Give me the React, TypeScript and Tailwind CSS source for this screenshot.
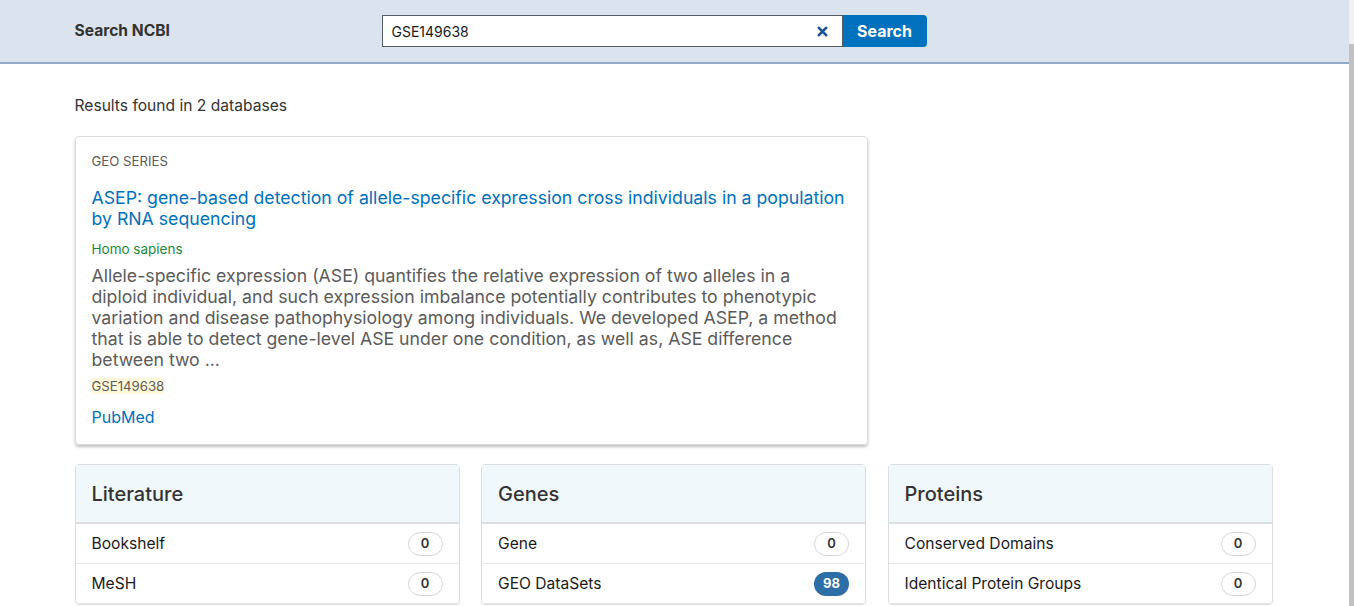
import { X } from "lucide-react";

type Db = { name: string; count: number };

const groups: { title: string; items: Db[] }[] = [
  {
    title: "Literature",
    items: [
      { name: "Bookshelf", count: 0 },
      { name: "MeSH", count: 0 },
    ],
  },
  {
    title: "Genes",
    items: [
      { name: "Gene", count: 0 },
      { name: "GEO DataSets", count: 98 },
    ],
  },
  {
    title: "Proteins",
    items: [
      { name: "Conserved Domains", count: 0 },
      { name: "Identical Protein Groups", count: 0 },
    ],
  },
];

function Badge({ count }: { count: number }) {
  if (count > 0) {
    return (
      <span className="flex h-6 min-w-[35px] items-center justify-center rounded-full bg-[#2e6ea6] px-2 text-[13px] font-bold text-white">
        {count}
      </span>
    );
  }
  return (
    <span className="flex h-6 min-w-[35px] items-center justify-center rounded-full border border-[#d6d7d9] bg-white px-2 text-[13px] font-semibold text-[#333]">
      {count}
    </span>
  );
}

export default function App() {
  return (
    <div className="flex h-[606px] overflow-hidden bg-white font-['Inter',sans-serif] text-[#333]">
      <div className="flex min-w-0 flex-1 flex-col">
        {/* top search bar */}
        <header className="h-[64px] shrink-0 border-b-2 border-[#8fa9c6] bg-[#dbe4ee]">
          <div className="mx-auto flex h-full w-full max-w-[1200px] items-center">
            <span className="w-[307px] text-[15.6px] font-bold text-[#333]">Search NCBI</span>
            <div className="flex h-8 items-stretch">
              <div className="flex w-[461px] items-center border border-[#565c65] bg-white pl-[9px] pr-3">
                <span className="flex-1 text-[14px] text-[#1b1b1b]">GSE149638</span>
                <X className="h-[15px] w-[15px] text-[#205493]" strokeWidth={4} />
              </div>
              <button className="w-[84px] rounded-r-[4px] bg-[#0071bc] text-base font-bold text-white">
                Search
              </button>
            </div>
          </div>
        </header>

        <main className="mx-auto w-full max-w-[1200px]">
          <p className="mt-[31px] text-[15.6px] leading-[22px] text-[#333]">Results found in 2 databases</p>

          <article className="mt-[19px] w-[793px] rounded-[4px] border border-[#dcdcdc] px-4 pt-[15px] pb-[15px] shadow-[0_2px_3px_rgba(0,0,0,0.25)]">
            <div className="text-[13.2px] uppercase text-[#5c5c5c]">GEO Series</div>
            <a className="mt-[15px] block text-[17.7px] leading-[21px] text-[#0071bc]">
              ASEP: gene-based detection of allele-specific expression cross individuals in a population by RNA sequencing
            </a>
            <div className="mt-[10px] text-[13.5px] text-[#178a3d]">Homo sapiens</div>
            <p className="mt-[6px] text-[17.7px] leading-[21px] text-[#5b5b5b]">
              Allele-specific expression (ASE) quantifies the relative expression of two alleles in a diploid
              individual, and such expression imbalance potentially contributes to phenotypic variation and disease
              pathophysiology among individuals. We developed ASEP, a method that is able to detect gene-level ASE
              under one condition, as well as, ASE difference between two ...
            </p>
            <div className="mt-[3px]">
              <span className="bg-[#fff8d8] text-[13.2px] text-[#5c5c5c]">GSE149638</span>
            </div>
            <a className="mt-[8px] block text-[16px] text-[#0071bc]">PubMed</a>
          </article>

          <div className="mt-[19px] grid grid-cols-3 gap-[21.5px] pr-[2px]">
            {groups.map((g) => (
              <section key={g.title} className="rounded-[4px] border border-[#dcdee0]">
                <h2 className="flex h-[59px] items-center border-b-2 border-[#dcdee0] bg-[#f1f8fc] px-4 text-[20px] font-medium text-[#333]">
                  {g.title}
                </h2>
                <ul>
                  {g.items.map((it) => (
                    <li
                      key={it.name}
                      className="flex h-10 items-center justify-between border-b border-[#e6e6e6] px-4 text-[15.6px] text-[#1b1b1b]"
                    >
                      <span>{it.name}</span>
                      <Badge count={it.count} />
                    </li>
                  ))}
                </ul>
              </section>
            ))}
          </div>
        </main>
      </div>

      {/* window scrollbar */}
      <div className="flex w-[5px] shrink-0 flex-col bg-[#f1f1f1]">
        <div className="h-[44px]" />
        <div className="flex-1 bg-[#c1c1c1]" />
      </div>
    </div>
  );
}
